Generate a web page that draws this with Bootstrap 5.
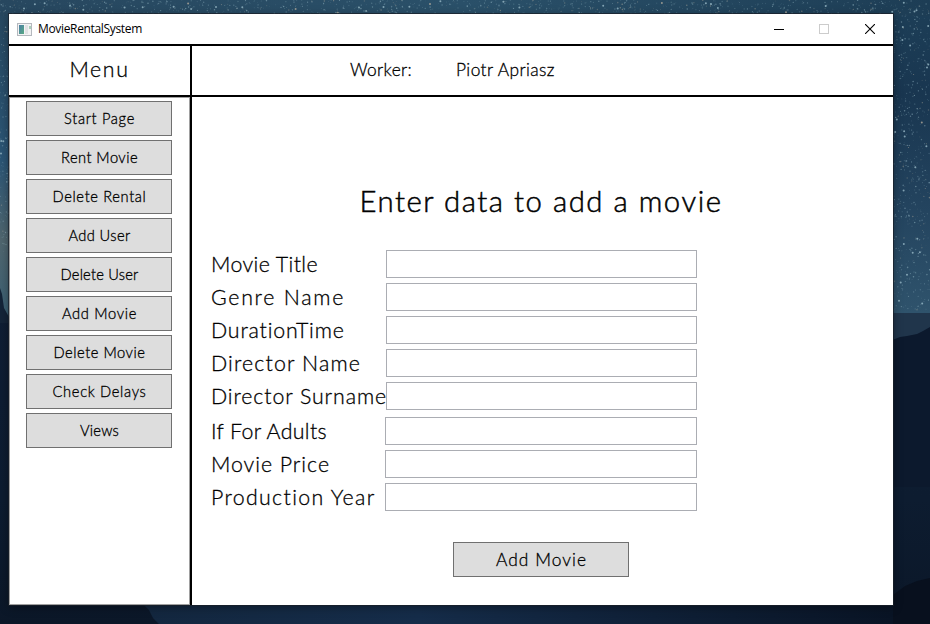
<!DOCTYPE html>
<html lang="en">
<head>
<meta charset="utf-8">
<meta name="viewport" content="width=device-width, initial-scale=1">
<title>MovieRentalSystem</title>
<link rel="stylesheet" href="https://cdn.jsdelivr.net/npm/bootstrap@5.3.0/dist/css/bootstrap.min.css">
<style>
  body { width: 930px; height: 624px; background: #10203a; font-family: "Century Gothic", Lato, sans-serif; font-weight: 300; -webkit-text-stroke: .3px #000; color: #000; }
  .desktop-sky { left: 0; top: 0; z-index: 0; }
  .app-window { width: 884px; height: 591px; margin: 14px 0 0 9px; z-index: 1; box-shadow: 0 0 0 1px rgba(25,32,42,.75), 0 2px 9px rgba(0,0,0,.4); }
  .title-bar { height: 30px; font: 12px "Open Sans", sans-serif; -webkit-text-stroke: 0; padding-left: 8px; }
  .title-bar .app-name { margin-left: 6px; padding-bottom: 1px; }
  .win-control { width: 46px; height: 30px; }
  .win-control.win-min { padding-left: 1px; }
  .head-row { height: 53px; border-top: 2px solid #000; border-bottom: 2px solid #000; }
  .menu-title { width: 181px; font-size: 21.33px; padding-bottom: 1px; }
  .head-main { border-left: 2px solid #000; font-size: 17.33px; padding: 0 0 2px 158px; }
  .worker-label { width: 106px; }
  .side-menu { width: 181px; border: 1px solid #a0a0a0; padding: 3px 16px; gap: 4px; }
  .content-pane { border-left: 2px solid #000; padding: 84px 0 0 19px; }
  .flat-btn { height: 35px; border: 1px solid #707070; border-radius: 0; background: #ddd; color: #000; padding: 0; line-height: 1; font-size: 14.67px; font-weight: 300; }
  .flat-btn:hover { background: #d0e4f4; border-color: #3c7fb1; color: #000; }
  .menu-btn { width: 146px; padding: 2px 0 0 1px; }
  .page-title { font-size: 29.33px; line-height: 40px; width: 660px; margin-bottom: 29px; font-weight: 300; -webkit-text-stroke-width: .5px; }
  .field-row { height: 28px; margin-bottom: 5px; }
  .field-label { width: 175px; font-size: 21.33px; line-height: 28px; }
  .field-input { width: 311px; height: 28px; border: 1px solid #abadb3; border-radius: 0; padding: 0 4px; }
  .second-group { margin-top: 7px; }
  .second-group .field-label { width: 174px; }
  .second-group .field-input { width: 312px; }
  .submit-btn { width: 176px; font-size: 17.33px; margin: 26px 0 0 242px; padding-left: 1px; }
  [data-fit] { white-space: nowrap; display: inline-block; }
</style>
<script src="https://cdn.jsdelivr.net/npm/bootstrap@5.3.0/dist/js/bootstrap.bundle.min.js"></script>
</head>
<body class="overflow-hidden m-0">
<svg class="desktop-sky position-absolute" width="930" height="624" aria-hidden="true">
  <defs>
    <linearGradient id="skyTop" x1="0" x2="1" y1="0" y2="0"><stop offset="0" stop-color="#27475f"/><stop offset=".5" stop-color="#2a5069"/><stop offset="1" stop-color="#1d3d55"/></linearGradient>
    <linearGradient id="skyLeft" x1="0" x2="0" y1="0" y2="1"><stop offset="0" stop-color="#27475f"/><stop offset=".5" stop-color="#2b5575"/><stop offset=".75" stop-color="#50666f"/><stop offset="1" stop-color="#3a5f73"/></linearGradient>
    <linearGradient id="skyRight" x1="0" x2="0" y1="0" y2="1"><stop offset="0" stop-color="#1d3f58"/><stop offset=".3" stop-color="#193650"/><stop offset=".65" stop-color="#23435e"/><stop offset="1" stop-color="#2f536c"/></linearGradient>
    <linearGradient id="forest" x1="0" x2="0" y1="0" y2="1"><stop offset="0" stop-color="#12203a"/><stop offset=".8" stop-color="#0d1c30"/><stop offset="1" stop-color="#0b1728"/></linearGradient>
    <linearGradient id="lake" x1="0" x2="1" y1="0" y2="0"><stop offset="0" stop-color="#13273f"/><stop offset=".35" stop-color="#152c49"/><stop offset="1" stop-color="#081222"/></linearGradient>
  </defs>
  <rect width="930" height="624" fill="url(#forest)"/>
  <rect width="14" height="320" fill="url(#skyLeft)"/>
  <rect x="885" width="45" height="313" fill="url(#skyRight)"/>
  <rect x="885" y="313" width="45" height="30" fill="#20354b"/>
  <rect width="930" height="16" fill="url(#skyTop)"/>
  <path d="M0 288l2 6 2 14 5 9v6H0z" fill="#142438"/>
  <path d="M885 342l10-3 5-2 7-1 10-2 6-3 7-4v160h-45z" fill="#0c192d"/>
  <path d="M143 604l6 6 4 8 6 6h771v-20z" fill="url(#lake)"/>
  <path d="M893 595l12-9 12-5 13-3v46h-37z" fill="#08101e"/>
  <g id="stars"></g>
</svg>

<main class="app-window position-relative bg-white d-flex flex-column">
  <header class="title-bar d-flex align-items-center">
    <svg width="15" height="13" viewBox="0 0 15 13" aria-hidden="true">
      <defs><linearGradient id="appFill" x1="0" x2="1" y1="0" y2="1"><stop offset="0" stop-color="#4b7fa6"/><stop offset="1" stop-color="#58a982"/></linearGradient></defs>
      <rect x=".5" y=".5" width="14" height="12" fill="#f3f3f4" stroke="#b4b8be"/>
      <rect x="2" y="2" width="5" height="9" fill="url(#appFill)"/>
      <rect x="8" y="2" width="3" height="9" fill="#e1e2e4"/><rect x="12" y="3" width="2" height="3" fill="#a9d0bb"/>
    </svg>
    <span class="app-name" data-fit="104">MovieRentalSystem</span>
    <div class="ms-auto d-flex">
      <span class="win-control win-min d-flex align-items-center justify-content-center"><svg width="11" height="10" shape-rendering="crispEdges"><path d="M1 5.5h10" stroke="#000"/></svg></span>
      <span class="win-control d-flex align-items-center justify-content-center"><svg width="10" height="10" shape-rendering="crispEdges"><rect x=".5" y=".5" width="9" height="9" fill="none" stroke="#ccc"/></svg></span>
      <span class="win-control d-flex align-items-center justify-content-center"><svg width="10" height="10"><path d="M0 0l10 10M10 0L0 10" stroke="#000" stroke-width="1.1"/></svg></span>
    </div>
  </header>
  <div class="head-row d-flex">
    <div class="menu-title d-flex align-items-center justify-content-center"><span data-fit="60">Menu</span></div>
    <div class="head-main d-flex align-items-center flex-grow-1">
      <div class="worker-label"><span data-fit="62">Worker:</span></div>
      <span data-fit="99">Piotr Apriasz</span>
    </div>
  </div>
  <div class="d-flex flex-grow-1">
    <nav class="side-menu d-flex flex-column">
      <button class="btn flat-btn menu-btn"><span data-fit="71">Start Page</span></button>
      <button class="btn flat-btn menu-btn"><span data-fit="77">Rent Movie</span></button>
      <button class="btn flat-btn menu-btn"><span data-fit="94">Delete Rental</span></button>
      <button class="btn flat-btn menu-btn"><span data-fit="62">Add User</span></button>
      <button class="btn flat-btn menu-btn"><span data-fit="78">Delete User</span></button>
      <button class="btn flat-btn menu-btn"><span data-fit="75">Add Movie</span></button>
      <button class="btn flat-btn menu-btn"><span data-fit="92">Delete Movie</span></button>
      <button class="btn flat-btn menu-btn"><span data-fit="94">Check Delays</span></button>
      <button class="btn flat-btn menu-btn"><span data-fit="39">Views</span></button>
    </nav>
    <section class="content-pane flex-grow-1">
      <h1 class="page-title text-center"><span data-fit="363">Enter data to add a movie</span></h1>
      <form>
        <div class="field-row d-flex"><label class="field-label" for="f1"><span data-fit="107">Movie Title</span></label><input id="f1" class="form-control field-input"></div>
        <div class="field-row d-flex"><label class="field-label" for="f2"><span data-fit="134">Genre Name</span></label><input id="f2" class="form-control field-input"></div>
        <div class="field-row d-flex"><label class="field-label" for="f3"><span data-fit="134">DurationTime</span></label><input id="f3" class="form-control field-input"></div>
        <div class="field-row d-flex"><label class="field-label" for="f4"><span data-fit="150">Director Name</span></label><input id="f4" class="form-control field-input"></div>
        <div class="field-row d-flex"><label class="field-label" for="f5"><span data-fit="176">Director Surname</span></label><input id="f5" class="form-control field-input"></div>
        <div class="second-group">
          <div class="field-row d-flex"><label class="field-label" for="f6"><span data-fit="116">If For Adults</span></label><input id="f6" class="form-control field-input"></div>
          <div class="field-row d-flex"><label class="field-label" for="f7"><span data-fit="119">Movie Price</span></label><input id="f7" class="form-control field-input"></div>
          <div class="field-row d-flex"><label class="field-label" for="f8"><span data-fit="165">Production Year</span></label><input id="f8" class="form-control field-input"></div>
        </div>
        <button type="button" class="btn flat-btn submit-btn"><span data-fit="91">Add Movie</span></button>
      </form>
    </section>
  </div>
</main>
<script>
  // Track each caption out to its intended width.
  document.querySelectorAll('[data-fit]').forEach(function (el) {
    var gap = (Number(el.dataset.fit) - el.getBoundingClientRect().width) / el.textContent.length;
    el.style.letterSpacing = gap.toFixed(3) + 'px';
  });
  // Scatter stars over the visible strips of sky.
  var seed = 7, out = '';
  function rnd() { seed = (seed * 16807) % 2147483647; return seed / 2147483647; }
  function scatter(n, x, y, w, h) {
    for (var i = 0; i < n; i++) {
      var big = rnd() > .96;
      out += '<circle cx="' + (x + rnd() * w).toFixed(1) + '" cy="' + (y + rnd() * h).toFixed(1) + '" r="' + (big ? 1 : .3 + rnd() * .5).toFixed(2) +
        '" fill="' + (rnd() > .85 ? '#c4b8a4' : '#a9cbd6') + '" opacity="' + (big ? .7 : .1 + rnd() * .4).toFixed(2) + '"/>';
    }
  }
  scatter(900, 0, 0, 930, 14);
  scatter(110, 0, 14, 9, 240);
  scatter(560, 893, 14, 37, 297);
  document.getElementById('stars').innerHTML = out;
</script>
</body>
</html>
